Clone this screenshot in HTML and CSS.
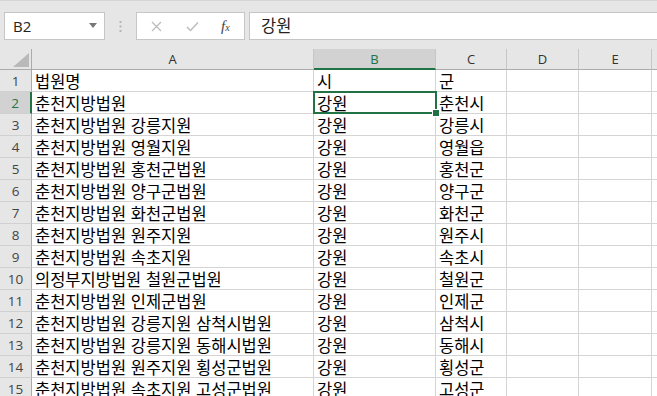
FILE: index.html
```html
<!DOCTYPE html>
<html lang="ko">
<head>
    <meta charset="UTF-8">
    <meta name="viewport" content="width=device-width, initial-scale=1.0">
    <title>법원 목록 - Excel</title>
    <link rel="stylesheet" href="styles.css">
</head>
<body>
    <div class="formula-bar">
        <div class="name-box">
            <span>B2</span>
            <svg class="caret" width="8" height="5" viewBox="0 0 8 5"><path d="M0 0h8L4 5z" fill="#777"/></svg>
        </div>
        <div class="grip">
            <svg width="3" height="11" viewBox="0 0 3 11"><rect x="0.5" y="0" width="2" height="2" fill="#b5b5b5"/><rect x="0.5" y="4.5" width="2" height="2" fill="#b5b5b5"/><rect x="0.5" y="9" width="2" height="2" fill="#b5b5b5"/></svg>
        </div>
        <div class="fx-buttons">
            <svg class="btn-icon" width="11" height="11" viewBox="0 0 11 11"><path d="M1 1L10 10M10 1L1 10" stroke="#bcbcbc" stroke-width="1.3" fill="none"/></svg>
            <svg class="btn-icon" width="13" height="11" viewBox="0 0 13 11"><path d="M1 6L4.5 9.5L12 1.5" stroke="#bcbcbc" stroke-width="1.5" fill="none"/></svg>
            <span class="fx">f<sub>x</sub></span>
        </div>
        <div class="formula-input">강원</div>
    </div>

    <div class="sheet" id="sheet">
        <div class="corner"><svg width="16" height="14" viewBox="0 0 16 14"><path d="M16 0V14H0z" fill="#b9b9b9"/></svg></div>
        <div class="col-head">A</div>
        <div class="col-head active">B</div>
        <div class="col-head">C</div>
        <div class="col-head">D</div>
        <div class="col-head">E</div>
        <div class="col-head last"></div>
        <div class="selection"><span class="fill-handle"></span></div>
    </div>

    <script>
        const rows = [
            ["법원명", "시", "군"],
            ["춘천지방법원", "강원", "춘천시"],
            ["춘천지방법원 강릉지원", "강원", "강릉시"],
            ["춘천지방법원 영월지원", "강원", "영월읍"],
            ["춘천지방법원 홍천군법원", "강원", "홍천군"],
            ["춘천지방법원 양구군법원", "강원", "양구군"],
            ["춘천지방법원 화천군법원", "강원", "화천군"],
            ["춘천지방법원 원주지원", "강원", "원주시"],
            ["춘천지방법원 속초지원", "강원", "속초시"],
            ["의정부지방법원 철원군법원", "강원", "철원군"],
            ["춘천지방법원 인제군법원", "강원", "인제군"],
            ["춘천지방법원 강릉지원 삼척시법원", "강원", "삼척시"],
            ["춘천지방법원 강릉지원 동해시법원", "강원", "동해시"],
            ["춘천지방법원 원주지원 횡성군법원", "강원", "횡성군"],
            ["춘천지방법원 속초지원 고성군법원", "강원", "고성군"]
        ];

        const sheet = document.getElementById("sheet");
        const selection = sheet.querySelector(".selection");

        function addCell(text, className) {
            const cell = document.createElement("div");
            cell.className = className;
            cell.innerText = text;
            sheet.insertBefore(cell, selection);
        }

        rows.forEach((row, i) => {
            addCell(i + 1, i === 1 ? "row-head active" : "row-head");
            row.forEach(value => addCell(value, "cell"));
            addCell("", "cell");
            addCell("", "cell");
            addCell("", "cell last");
        });
    </script>
</body>
</html>
```

FILE: styles.css
```css
body {
    margin: 0;
    width: 657px;
    height: 396px;
    overflow: hidden;
    background: #fff;
    font-family: "Noto Sans CJK KR", "Noto Sans", sans-serif;
}
.formula-bar {
    height: 49px;
    box-sizing: border-box;
    border-top: 1px solid #d6d6d6;
    background: #e6e6e6;
    display: flex;
    align-items: flex-start;
    padding: 11px 0 0 4px;
}
.name-box {
    width: 101px;
    height: 28px;
    box-sizing: border-box;
    border: 1px solid #c6c6c6;
    background: #fff;
    display: flex;
    align-items: center;
    justify-content: space-between;
    padding: 0 7px 0 8px;
    font-family: "Open Sans", "Noto Sans", sans-serif;
    font-size: 15px;
    color: #222;
}
.caret { margin-top: -2px; }
.grip {
    width: 31px;
    height: 28px;
    display: flex;
    align-items: center;
    justify-content: center;
}
.fx-buttons {
    width: 109px;
    height: 28px;
    box-sizing: border-box;
    border: 1px solid #c6c6c6;
    background: #fff;
    display: flex;
    align-items: center;
    padding: 0 0 0 14px;
    gap: 24px;
}
.fx {
    font-family: "Liberation Serif", serif;
    font-style: italic;
    font-size: 15px;
    color: #444;
    margin-left: -2px;
}
.fx sub {
    font-size: 10px;
    vertical-align: 0;
}
.formula-input {
    flex: 1;
    height: 28px;
    box-sizing: border-box;
    margin-left: 4px;
    border: 1px solid #c6c6c6;
    border-right: none;
    background: #fff;
    padding: 0 11px;
    font-size: 16.5px;
    line-height: 25px;
    color: #222;
}
.sheet {
    position: relative;
    display: grid;
    grid-template-columns: 32px 282px 122px 71px 72px 73px 1fr;
    grid-template-rows: 21px;
    grid-auto-rows: 22px;
}
.corner, .col-head, .row-head, .cell {
    box-sizing: border-box;
    white-space: nowrap;
    overflow: hidden;
}
.corner {
    background: #e6e6e6;
    border-right: 1px solid #ababab;
    border-bottom: 1px solid #ababab;
    display: flex;
    align-items: flex-end;
    justify-content: flex-end;
    padding: 0 2px 2px 0;
}
.col-head {
    background: #e6e6e6;
    border-right: 1px solid #c6c6c6;
    border-bottom: 1px solid #ababab;
    text-align: center;
    font-family: "Open Sans", "Noto Sans", sans-serif;
    font-size: 13px;
    line-height: 20px;
    color: #333;
}
.col-head.active {
    background: #d2d2d2;
    border-bottom: 2px solid #217346;
    color: #217346;
}
.col-head.last, .cell.last { border-right: none; }
.row-head {
    background: #e6e6e6;
    border-right: 1px solid #ababab;
    border-bottom: 1px solid #d0d0d0;
    text-align: center;
    font-family: "Open Sans", "Noto Sans", sans-serif;
    font-size: 13.5px;
    line-height: 22px;
    color: #444;
}
.row-head.active {
    background: #d2d2d2;
    border-right: 2px solid #217346;
    color: #217346;
}
.cell {
    border-right: 1px solid #d4d4d4;
    border-bottom: 1px solid #d4d4d4;
    padding: 0 3px;
    font-size: 16.5px;
    line-height: 23px;
    color: #000;
}
.selection {
    position: absolute;
    left: 313px;
    top: 42px;
    width: 124px;
    height: 23px;
    box-sizing: border-box;
    border: 2px solid #217346;
    pointer-events: none;
}
.fill-handle {
    position: absolute;
    right: -5px;
    bottom: -5px;
    width: 6px;
    height: 6px;
    background: #217346;
    border: 1px solid #fff;
}
```
